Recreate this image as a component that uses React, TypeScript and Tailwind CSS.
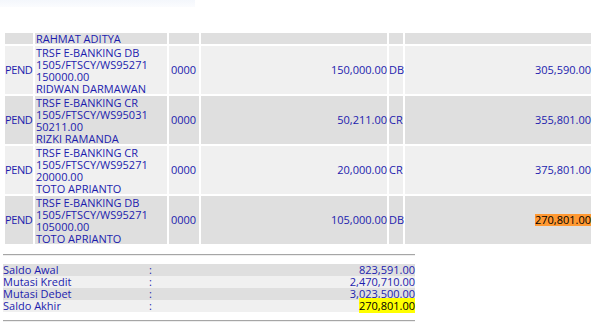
const rows = [
  { desc: ["TRSF E-BANKING DB", "1505/FTSCY/WS95271", "150000.00", "RIDWAN DARMAWAN"], amount: "150,000.00", type: "DB", saldo: "305,590.00" },
  { desc: ["TRSF E-BANKING CR", "1505/FTSCY/WS95031", "50211.00", "RIZKI RAMANDA"], amount: "50,211.00", type: "CR", saldo: "355,801.00" },
  { desc: ["TRSF E-BANKING CR", "1505/FTSCY/WS95271", "20000.00", "TOTO APRIANTO"], amount: "20,000.00", type: "CR", saldo: "375,801.00" },
  { desc: ["TRSF E-BANKING DB", "1505/FTSCY/WS95271", "105000.00", "TOTO APRIANTO"], amount: "105,000.00", type: "DB", saldo: "270,801.00", last: true },
];

const summary = [
  { label: "Saldo Awal", value: "823,591.00" },
  { label: "Mutasi Kredit", value: "2,470,710.00" },
  { label: "Mutasi Debet", value: "3,023,500.00" },
  { label: "Saldo Akhir", value: "270,801.00", hi: true },
];

export default function App() {
  return (
    <div className="relative h-[333px] w-[611px] overflow-hidden bg-white font-['Open_Sans',Tahoma,sans-serif] text-[11px] leading-[12px] text-[#1c1cae]">
      <div className="h-[7px] w-[195px] bg-gradient-to-b from-[#f4f7fc] to-[#fbfcfe]" />

      {/* mutasi table */}
      <div className="ml-[5px] mt-[26px] grid w-[586px] grid-cols-[28px_132px_30px_186px_14px_186px] gap-[2px]">
        <div className="h-[11px] bg-[#dfdfdf]" />
        <div className="h-[11px] whitespace-nowrap bg-[#dfdfdf] px-[1px] leading-[11px]">RAHMAT ADITYA</div>
        <div className="bg-[#dfdfdf]" />
        <div className="bg-[#dfdfdf]" />
        <div className="bg-[#dfdfdf]" />
        <div className="bg-[#dfdfdf]" />

        {rows.map((r, i) => {
          const bg = i % 2 === 0 ? "bg-[#f0f0f0]" : "bg-[#dfdfdf]";
          return (
            <div key={i} className="contents">
              <div className={`${bg} flex h-[48px] items-center whitespace-nowrap tracking-[-0.4px]`}>PEND</div>
              <div className={`${bg} flex h-[48px] flex-col justify-center whitespace-nowrap px-[1px] pt-[1px]`}>
                {r.desc.map((d) => (
                  <div key={d} className="h-[12px]">{d}</div>
                ))}
              </div>
              <div className={`${bg} flex items-center px-[2px]`}>0000</div>
              <div className={`${bg} flex items-center justify-end`}>{r.amount}</div>
              <div className={`${bg} flex items-center whitespace-nowrap`}>{r.type}</div>
              <div className={`${bg} flex items-center justify-end`}>
                {r.last ? <span className="bg-[#ff9933] text-black">{r.saldo}</span> : r.saldo}
              </div>
            </div>
          );
        })}
      </div>

      {/* ringkasan */}
      <div className="ml-[3px] mt-[10px] w-[412px]">
        <div className="border-t border-b border-t-[#a6a6a6] border-b-[#eeeeee]" />
        <div className="mt-[8px]">
          {summary.map((s, i) => (
            <div key={s.label} className={`flex h-[12px] items-center ${i % 2 === 0 ? "bg-[#dfdfdf]" : "bg-[#f0f0f0]"}`}>
              <span className="w-[146px]">{s.label}</span>
              <span className="w-[10px]">:</span>
              <span className="flex-1 text-right">
                {s.hi ? <span className="bg-[#ffff00] text-black">{s.value}</span> : s.value}
              </span>
            </div>
          ))}
        </div>
        <div className="mt-[8px] border-t border-b border-t-[#a6a6a6] border-b-[#eeeeee]" />
      </div>
    </div>
  );
}
